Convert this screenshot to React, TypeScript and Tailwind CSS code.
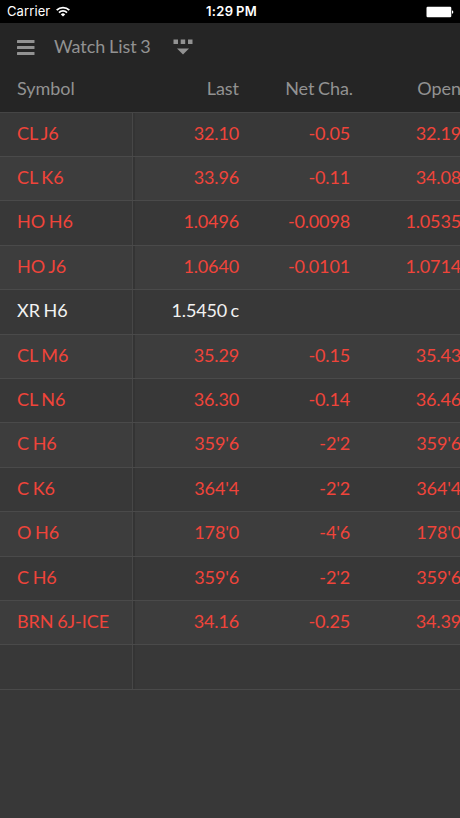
type Quote = { symbol: string; last: string; net: string; open: string; closed?: boolean };

const quotes: Quote[] = [
  { symbol: "CL J6", last: "32.10", net: "-0.05", open: "32.19" },
  { symbol: "CL K6", last: "33.96", net: "-0.11", open: "34.08" },
  { symbol: "HO H6", last: "1.0496", net: "-0.0098", open: "1.0535" },
  { symbol: "HO J6", last: "1.0640", net: "-0.0101", open: "1.0714" },
  { symbol: "XR H6", last: "1.5450 c", net: "", open: "", closed: true },
  { symbol: "CL M6", last: "35.29", net: "-0.15", open: "35.43" },
  { symbol: "CL N6", last: "36.30", net: "-0.14", open: "36.46" },
  { symbol: "C H6", last: "359'6", net: "-2'2", open: "359'6" },
  { symbol: "C K6", last: "364'4", net: "-2'2", open: "364'4" },
  { symbol: "O H6", last: "178'0", net: "-4'6", open: "178'0" },
  { symbol: "C H6", last: "359'6", net: "-2'2", open: "359'6" },
  { symbol: "BRN 6J-ICE", last: "34.16", net: "-0.25", open: "34.39" },
  { symbol: "", last: "", net: "", open: "" },
];

const columns = "grid grid-cols-[133px_106px_111px_111px]";

function StatusBar() {
  return (
    <div className="grid h-[23px] shrink-0 grid-cols-3 items-center bg-black pt-px font-['Inter','Liberation_Sans',sans-serif] text-[13px] text-white">
      <div className="flex items-center gap-[6px] pl-[7px] tracking-[0.1px]">
        <span>Carrier</span>
        <svg className="-mt-[2px]" width="14" height="11" viewBox="0 0 14 11" fill="none" stroke="white" strokeWidth="1.8">
          <path d="M.7 4.1a9 9 0 0 1 12.6 0" />
          <path d="M3 6.6a5.7 5.7 0 0 1 8 0" />
          <path d="M7 10.6 4.8 8.4a3.1 3.1 0 0 1 4.4 0Z" fill="white" stroke="none" />
        </svg>
      </div>
      <div className="pl-[3px] text-center font-semibold tracking-[0.35px]">1:29 PM</div>
      <div className="flex justify-end pr-[6px]">
        <svg className="-mt-px" width="28" height="12" viewBox="0 0 28 12" fill="white">
          <rect x=".5" y=".8" width="24.8" height="10.4" rx="1.2" />
          <path d="M26 4.2q1.3.4 1.3 1.8T26 7.8Z" />
        </svg>
      </div>
    </div>
  );
}

function Toolbar() {
  return (
    <div className="flex h-[46px] items-center pl-[17px]">
      <svg className="mt-[2px]" width="18" height="15" viewBox="0 0 18 15" fill="#929292">
        <rect width="17.5" height="3" rx=".5" />
        <rect y="6" width="17.5" height="3" rx=".5" />
        <rect y="12" width="17.5" height="3" rx=".5" />
      </svg>
      <span className="ml-[19px] w-[119px] pt-px tracking-[-0.05px] [word-spacing:-0.8px]">Watch List 3</span>
      <svg className="mt-px" width="20" height="16" viewBox="0 0 20 16" fill="#929292">
        <rect x=".5" y=".5" width="4.5" height="4.5" />
        <rect x="7.7" y=".5" width="4.5" height="4.5" />
        <rect x="15" y=".5" width="4.5" height="4.5" />
        <path d="M4 9.6h12l-6 5.8Z" />
      </svg>
    </div>
  );
}

function Row({ quote }: { quote: Quote }) {
  return (
    <div
      className={`${columns} h-[44.4px] border-b border-[#4a4a4a] odd:bg-[#383838] even:bg-[#3d3d3d] leading-[41px] ${
        quote.closed ? "text-[#f2f2f2]" : "text-[#f0443a]"
      }`}
    >
      <div className="whitespace-nowrap border-r border-[#474747] pl-[17px] tracking-[-0.05px] [word-spacing:-0.9px]">
        {quote.symbol}
      </div>
      <div className="border-l-2 border-[#343434] text-right">{quote.last}</div>
      <div className="text-right">{quote.net}</div>
      <div className="text-right">{quote.open}</div>
    </div>
  );
}

export default function App() {
  return (
    <div className="flex h-[818px] w-[460px] flex-col overflow-hidden bg-[#383838] font-['Lato',sans-serif] text-[18px] tracking-[-0.15px] [word-spacing:-1px]">
      <StatusBar />
      <header className="h-[89.6px] shrink-0 border-b border-[#454545] bg-[#252525] text-[#929292]">
        <Toolbar />
        <div className={`${columns} leading-[38px] tracking-[-0.05px]`}>
          <div className="pl-[17px]">Symbol</div>
          <div className="text-right">Last</div>
          <div className="-mr-[3px] text-right">Net Cha.</div>
          <div className="text-right">Open</div>
        </div>
      </header>
      <main>
        {quotes.map((quote, i) => (
          <Row key={i} quote={quote} />
        ))}
      </main>
    </div>
  );
}
